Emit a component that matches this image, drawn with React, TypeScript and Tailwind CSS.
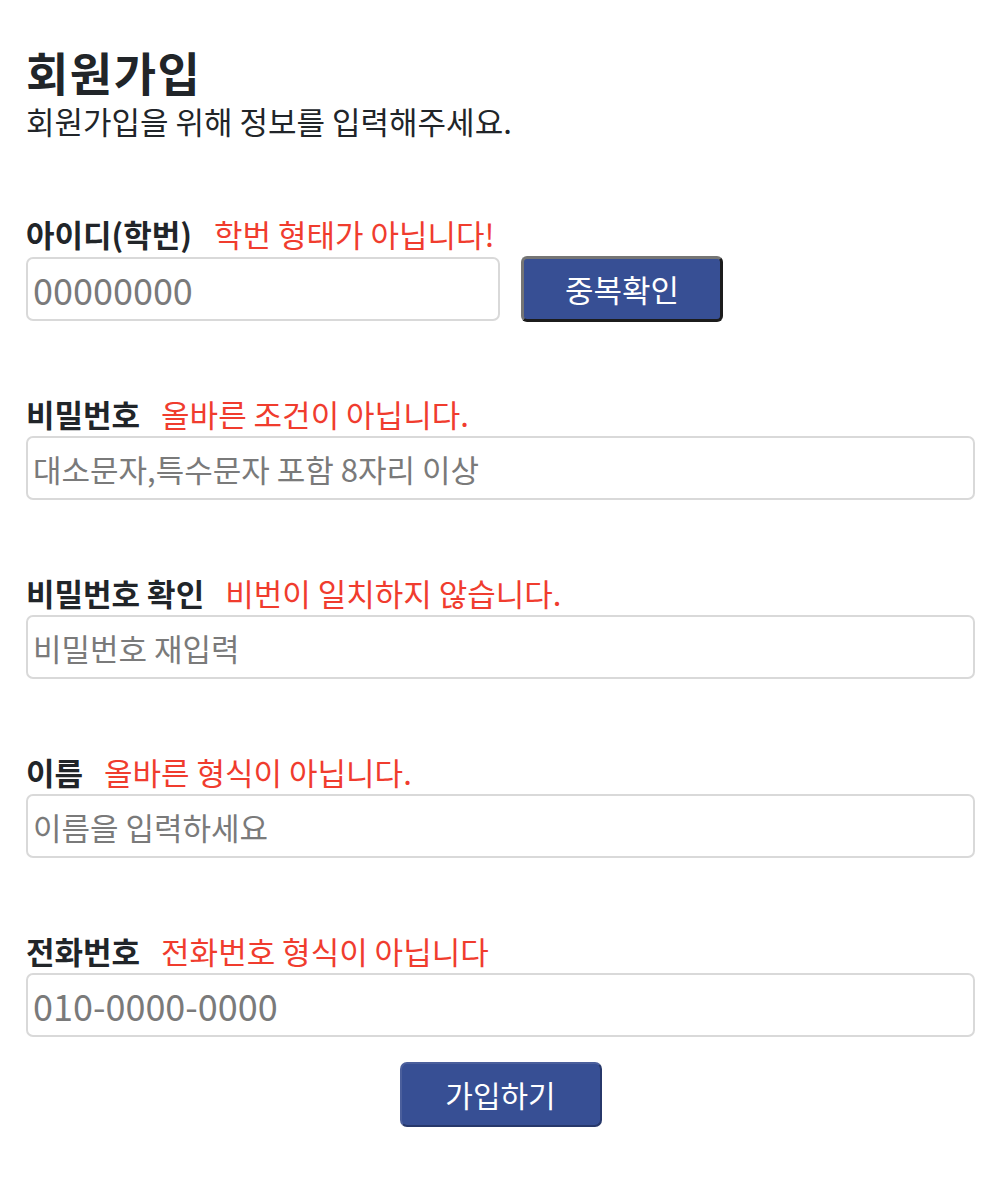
import React from "react";

const font = "font-['Noto_Sans_CJK_KR','Noto_Sans',sans-serif]";

function Field({
  label,
  error,
  placeholder,
  big,
  gap,
}: {
  label: string;
  error: string;
  placeholder: string;
  big?: boolean;
  gap: string;
}) {
  return (
    <div className={gap}>
      <div className="flex items-baseline h-[34px] mb-[5px] leading-[34px]">
        <span className="text-[31px] font-bold text-[#212529]">{label}</span>
        <span className="text-[31px] text-[#f03c2e] ml-[21px]">{error}</span>
      </div>
      <input
        className={`block w-[949px] h-[64px] rounded-[7px] border-2 border-[#d9d9d9] bg-white px-[5px] outline-none placeholder:text-[#7a7a7a] text-[#212529] ${
          big ? "text-[36px]" : "text-[31px]"
        } ${font}`}
        placeholder={placeholder}
      />
    </div>
  );
}

export default function App() {
  return (
    <div className={`w-[1000px] min-h-[1200px] bg-white pl-[26px] pt-[46px] text-[#212529] ${font}`}>
      <h1 className="text-[46px] font-bold leading-[50px] tracking-[1.5px]">회원가입</h1>
      <p className="text-[31px] leading-[34px] mt-[8px]">회원가입을 위해 정보를 입력해주세요.</p>

      <div className="mt-[79px]">
        <div className="flex items-baseline h-[34px] mb-[5px] leading-[34px]">
          <span className="text-[31px] font-bold text-[#212529]">아이디(학번)</span>
          <span className="text-[31px] text-[#f03c2e] ml-[22px]">학번 형태가 아닙니다!</span>
        </div>
        <div className="flex items-center gap-[21px]">
          <input
            className={`block w-[474px] h-[64px] rounded-[7px] border-2 border-[#d9d9d9] bg-white px-[5px] outline-none placeholder:text-[#7a7a7a] text-[36px] ${font}`}
            placeholder="00000000"
          />
          <button
            className={`w-[202px] h-[66px] rounded-[6px] bg-[#374f94] text-white text-[31px] border-[3px] border-t-[#757575] border-l-[#757575] border-b-[#1c1c1c] border-r-[#1c1c1c] ${font}`}
          >
            중복확인
          </button>
        </div>
      </div>

      <Field gap="mt-[75px]" label="비밀번호" error="올바른 조건이 아닙니다." placeholder="대소문자,특수문자 포함 8자리 이상" />
      <Field gap="mt-[76px]" label="비밀번호 확인" error="비번이 일치하지 않습니다." placeholder="비밀번호 재입력" />
      <Field gap="mt-[76px]" label="이름" error="올바른 형식이 아닙니다." placeholder="이름을 입력하세요" />
      <Field gap="mt-[76px]" label="전화번호" error="전화번호 형식이 아닙니다" placeholder="010-0000-0000" big />

      <div className="flex justify-center w-[949px] mt-[25px]">
        <button
          className={`w-[202px] h-[65px] rounded-[7px] bg-[#374f94] text-white text-[30px] border-2 border-t-[#4b5f9c] border-l-[#4b5f9c] border-b-[#27386b] border-r-[#27386b] ${font}`}
        >
          가입하기
        </button>
      </div>
    </div>
  );
}
